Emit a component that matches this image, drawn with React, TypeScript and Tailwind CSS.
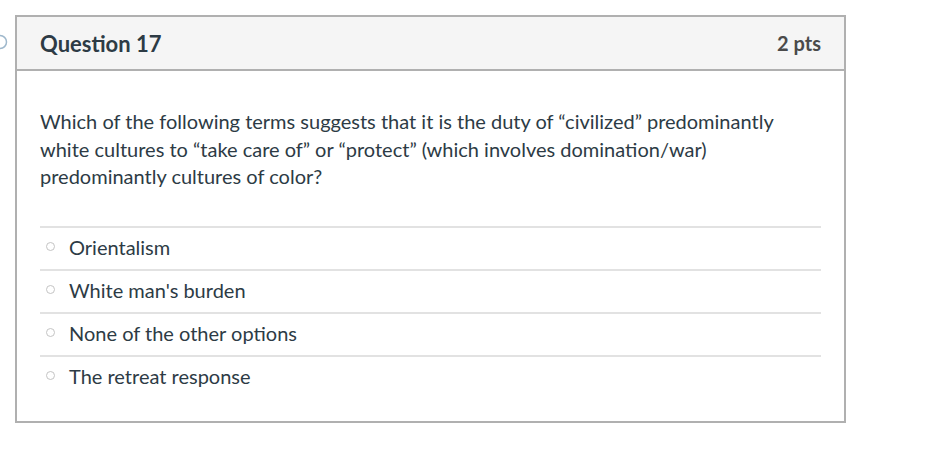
const ANSWERS = ["Orientalism", "White man's burden", "None of the other options", "The retreat response"];

export default function App() {
  return (
    <div className="relative min-h-[468px] w-[946px] bg-white pt-[15px] pl-[15px] font-['Lato',sans-serif] text-[#2d3b45]">
      {/* partial circle peeking in from the left edge */}
      <svg className="absolute left-[-8px] top-[34px]" width="16" height="16" viewBox="0 0 16 16">
        <circle cx="8" cy="8" r="6.5" fill="none" stroke="#9fb8cc" strokeWidth="1.5" />
      </svg>

      <div className="w-[831px] border-2 border-[#b0b0b0]">
        <div className="flex h-[54px] items-center justify-between border-b-2 border-[#b0b0b0] bg-[#f5f5f5] px-[23px]">
          <h2 className="text-[22px] font-bold">Question 17</h2>
          <span className="text-[20px] font-bold text-[#4a4a4a]">2 pts</span>
        </div>

        <div className="px-[23px] pt-[37px] pb-[23px]">
          <p className="text-[20px] leading-[27.5px]">
            Which of the following terms suggests that it is the duty of “civilized” predominantly white cultures to
            “take care of” or “protect” (which involves domination/war) predominantly cultures of color?
          </p>

          <div className="mt-[35px]">
            {ANSWERS.map((a) => (
              <div key={a} className="flex items-center gap-[14px] border-t-2 border-[#e2e2e2] pt-[7px] pb-[10px] pl-[6px]">
                <span className="h-[9px] w-[9px] rounded-full border border-[#c4c4c4] bg-white" />
                <span className="text-[20px] leading-[24px]">{a}</span>
              </div>
            ))}
          </div>
        </div>
      </div>
    </div>
  );
}
